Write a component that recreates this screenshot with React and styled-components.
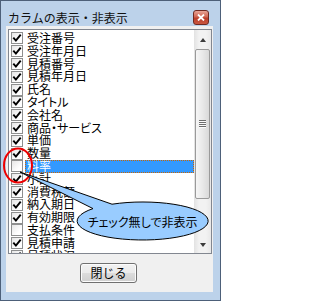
import React from 'react';
import styled, { createGlobalStyle } from 'styled-components';

const GlobalStyle = createGlobalStyle`
  html, body {
    margin: 0;
    padding: 0;
    background: #fff;
  }
  * {
    box-sizing: border-box;
  }
`;

const ROW_H = 12.8;

const columns = [
  { name: '受注番号', on: true },
  { name: '受注年月日', on: true },
  { name: '見積番号', on: true },
  { name: '見積年月日', on: true },
  { name: '氏名', on: true },
  { name: 'タイトル', on: true },
  { name: '会社名', on: true },
  { name: '商品・サービス', on: true },
  { name: '単価', on: true },
  { name: '数量', on: true },
  { name: '料率', on: false, selected: true },
  { name: '小計', on: true },
  { name: '消費税額', on: true },
  { name: '納入期日', on: true },
  { name: '有効期限', on: true },
  { name: '支払条件', on: false },
  { name: '見積申請', on: true },
  { name: '見積状況', on: true },
];

const Window = styled.div`
  position: relative;
  width: 221px;
  height: 301px;
  border: 1px solid #4d6079;
  background: #bcd2ea;
  padding: 0 7px 8px 5px;
  display: flex;
  flex-direction: column;
  font-family: "Noto Sans CJK JP", "Noto Sans", sans-serif;
  font-feature-settings: "palt";
  color: #000;
`;

const TitleBar = styled.div`
  height: 25px;
  display: flex;
  align-items: flex-start;
  padding: 8px 4px 0 2px;
`;

const Title = styled.div`
  flex: 1;
  font-size: 12px;
  line-height: 17px;
  font-feature-settings: normal;
  color: #111;
`;

const CloseButton = styled.div`
  width: 16px;
  height: 15px;
  margin-top: 1px;
  border: 1px solid #6e2a22;
  border-radius: 3px;
  background: linear-gradient(#e8a597, #cf6552 45%, #bb3f2b 55%, #c9553f);
  display: flex;
  align-items: center;
  justify-content: center;
`;

const Client = styled.div`
  flex: 1;
  background: #f0f0f0;
  display: flex;
  flex-direction: column;
  padding: 3px 1px 0 2px;
`;

const ListBox = styled.div`
  width: 204px;
  height: 225px;
  flex-shrink: 0;
  border: 1px solid #828790;
  background: #fff;
  display: flex;
  overflow: hidden;
`;

const Items = styled.div`
  flex: 1;
  padding: 2px 0 0 2px;
  display: flex;
  flex-direction: column;
  overflow: hidden;
`;

const Row = styled.div`
  height: ${ROW_H}px;
  flex-shrink: 0;
  display: flex;
  align-items: center;
`;

const CheckBox = styled.div`
  width: 12px;
  height: 12px;
  flex-shrink: 0;
  border: 1px solid #8e8f8f;
  background: linear-gradient(135deg, #e6e6e6, #fff 70%);
  display: flex;
  align-items: center;
  justify-content: center;
`;

const Label = styled.div`
  flex: 1;
  height: 100%;
  margin-left: 2px;
  padding: 0 2px;
  font-size: 12px;
  line-height: ${ROW_H}px;
  white-space: nowrap;
  color: ${(p) => (p.selected ? '#fff' : '#000')};
  background: ${(p) => (p.selected ? '#3399ff' : 'transparent')};
  outline: ${(p) => (p.selected ? '1px dotted #cc6600' : 'none')};
  outline-offset: -1px;
`;

const ScrollBar = styled.div`
  width: 17px;
  flex-shrink: 0;
  display: flex;
  flex-direction: column;
  background: linear-gradient(to right, #e2e2e2, #f2f2f2 30%, #f2f2f2 70%, #e8e8e8);
`;

const ArrowButton = styled.div`
  height: 17px;
  flex-shrink: 0;
  display: flex;
  align-items: center;
  justify-content: center;
  padding-top: ${(p) => (p.down ? '0' : '2px')};

  &::after {
    content: '';
    border-left: 3.5px solid transparent;
    border-right: 3.5px solid transparent;
    ${(p) => (p.down ? 'border-top' : 'border-bottom')}: 4px solid #3c3c3c;
  }
`;

const Thumb = styled.div`
  height: 150px;
  margin: 2px 1px 0;
  border: 1px solid #9a9a9a;
  border-radius: 2px;
  background: linear-gradient(to right, #f6f6f6, #e9e9e9 50%, #d9d9d9);
  display: flex;
  align-items: center;
  justify-content: center;
`;

const Grip = styled.div`
  width: 7px;
  height: 8px;
  background: repeating-linear-gradient(#6e6e6e 0 1px, #fbfbfb 1px 2px);
`;

const Track = styled.div`
  flex: 1;
`;

const Footer = styled.div`
  flex: 1;
  display: flex;
  align-items: center;
  justify-content: center;
  padding-right: 3px;
`;

const Button = styled.button`
  width: 57px;
  height: 20px;
  padding: 0;
  border: 1px solid #707070;
  border-radius: 3px;
  background: linear-gradient(#f2f2f2, #ebebeb 50%, #dddddd 50%, #cfcfcf);
  box-shadow: inset 0 0 0 1px #fcfcfc;
  font-family: inherit;
  font-size: 12px;
  line-height: 16px;
  color: #000;
`;

const Overlay = styled.svg`
  position: absolute;
  top: -1px;
  left: -1px;
  width: 221px;
  height: 301px;
  pointer-events: none;
`;

const CalloutLabel = styled.div`
  position: absolute;
  left: 76px;
  top: 201px;
  width: 131px;
  height: 38px;
  display: flex;
  align-items: center;
  justify-content: center;
  font-size: 12px;
  color: #000;
  pointer-events: none;
`;

const Check = () => (
  <svg width="10" height="10" viewBox="0 0 10 10">
    <path d="M1.3 4.6 L3.9 7.6 L8.7 1.6" fill="none" stroke="#000" strokeWidth="1.9" />
  </svg>
);

export default function App() {
  return (
    <>
      <GlobalStyle />
      <Window>
        <TitleBar>
          <Title>カラムの表示・非表示</Title>
          <CloseButton>
            <svg width="8" height="7" viewBox="0 0 8 7">
              <path d="M1 0.5 L7 6.5 M7 0.5 L1 6.5" stroke="#fff" strokeWidth="1.8" />
            </svg>
          </CloseButton>
        </TitleBar>
        <Client>
          <ListBox>
            <Items>
              {columns.map((c) => (
                <Row key={c.name}>
                  <CheckBox>{c.on && <Check />}</CheckBox>
                  <Label selected={c.selected}>{c.name}</Label>
                </Row>
              ))}
            </Items>
            <ScrollBar>
              <ArrowButton />
              <Thumb>
                <Grip />
              </Thumb>
              <Track />
              <ArrowButton down />
            </ScrollBar>
          </ListBox>
          <Footer>
            <Button>閉じる</Button>
          </Footer>
        </Client>

        <Overlay viewBox="0 0 221 301">
          <ellipse cx="18" cy="165.5" rx="14" ry="17" fill="none" stroke="#ee0000" strokeWidth="2" />
          <path
            d="M20 172 L93 208.6 A65.5 19 0 1 0 112 204.2 Z"
            fill="#99ccff"
            stroke="#000"
            strokeWidth="1"
          />
        </Overlay>
        <CalloutLabel>チェック無しで非表示</CalloutLabel>
      </Window>
    </>
  );
}
